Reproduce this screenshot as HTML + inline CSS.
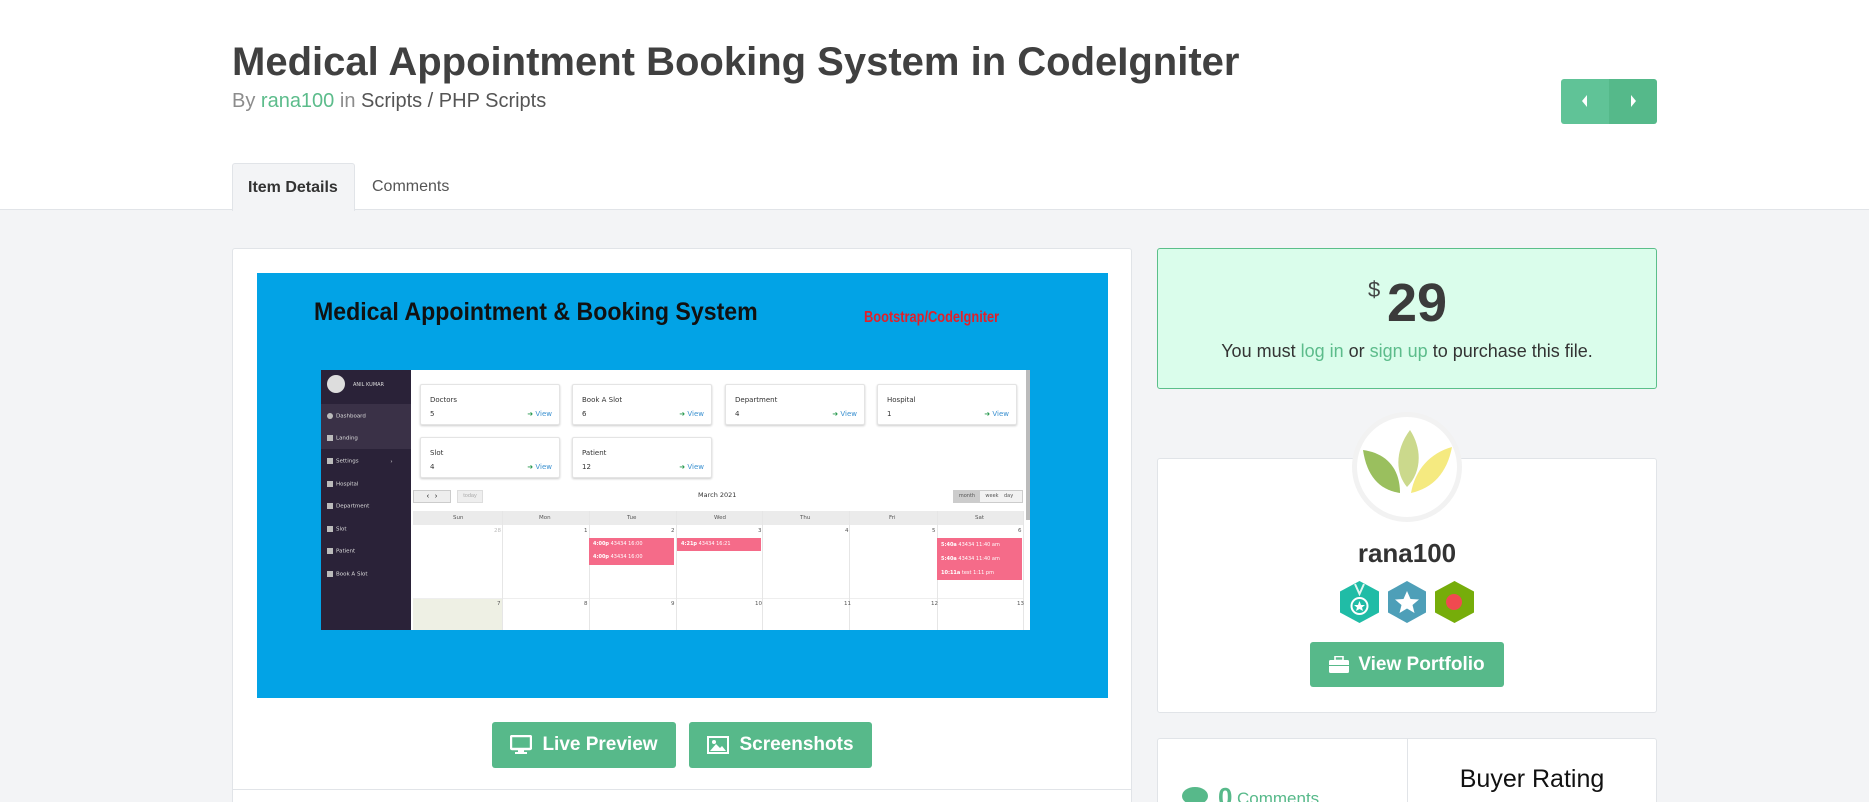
<!DOCTYPE html>
<html><head><meta charset="utf-8"><style>
*{margin:0;padding:0;box-sizing:border-box}
html,body{width:1869px;height:802px;overflow:hidden}
body{background:#f3f4f6;font-family:"Liberation Sans",Arial,sans-serif;position:relative}
.a{position:absolute}
.top{left:0;top:0;width:1869px;height:210px;background:#fff;border-bottom:1px solid #e1e4e8}
.btn{position:absolute;background:#57b98a;color:#fff;font-weight:bold;border-radius:3px;display:flex;align-items:center;justify-content:center;font-size:19px}
.card{position:absolute;background:#fff;border:1px solid #e1e4e8;border-radius:3px}
.sc{position:absolute;background:#fff;border:1px solid #e4e4e4;box-shadow:0 1px 2px rgba(0,0,0,.2);border-radius:2px;font-size:7px;color:#333;font-family:"DejaVu Sans",sans-serif}
.sc .t{position:absolute;left:9px;top:11px}
.sc .n{position:absolute;left:9px;top:25px}
.sc .v{position:absolute;right:7px;top:25px;color:#3a90d0}
.sc .v b{color:#2a9a50}
.si{position:absolute;left:327px;color:#ddd;font-size:5.5px;font-family:"DejaVu Sans",sans-serif;white-space:nowrap}
.si i{display:inline-block;width:6px;height:6px;background:#bbb;margin-right:3px;vertical-align:middle}
.col{position:absolute;top:511px;height:119px;border-left:1px solid #e6e6e6}
.dn{position:absolute;font-size:5.5px;color:#555;font-family:"DejaVu Sans",sans-serif}
.ev{position:absolute;background:#f56b89;color:#fff;font-size:5px;font-family:"DejaVu Sans",sans-serif;padding-left:4px}
</style></head><body>
<div class="a top"></div>
<div class="a" style="left:232px;top:40px;font-size:40px;font-weight:bold;color:#404040;white-space:nowrap">Medical Appointment Booking System in CodeIgniter</div>
<div class="a" style="left:232px;top:90px;font-size:20px;color:#8c8c8c;white-space:nowrap">By <span style="color:#5cbc8b">rana100</span> in <span style="color:#555">Scripts / PHP Scripts</span></div>
<div class="a" style="left:1561px;top:79px;width:48px;height:45px;background:#60c397;border-radius:3px 0 0 3px"></div>
<div class="a" style="left:1609px;top:79px;width:48px;height:45px;background:#55b98a;border-radius:0 3px 3px 0"></div>
<svg class="a" style="left:1579px;top:93px" width="12" height="16"><path d="M8 2 L3 8 L8 14Z" fill="#fff"/></svg>
<svg class="a" style="left:1627px;top:93px" width="12" height="16"><path d="M4 2 L9 8 L4 14Z" fill="#fff"/></svg>
<div class="a" style="left:232px;top:163px;width:123px;height:48px;background:#f3f4f6;border:1px solid #e1e4e8;border-bottom:none;border-radius:3px 3px 0 0"></div>
<div class="a" style="left:248px;top:179px;font-size:16px;font-weight:bold;color:#333">Item Details</div>
<div class="a" style="left:372px;top:178px;font-size:16px;color:#555">Comments</div>

<div class="card" style="left:232px;top:248px;width:900px;height:560px"></div>
<div class="a" style="left:232px;top:789px;width:900px;height:1px;background:#e1e4e8"></div>
<div class="a" style="left:257px;top:273px;width:851px;height:425px;background:#02a3e6"></div>
<div class="a" style="left:314px;top:298px;font-size:25px;font-weight:bold;color:#111;white-space:nowrap;transform:scaleX(.925);transform-origin:left">Medical Appointment &amp; Booking System</div>
<div class="a" style="left:864px;top:309px;font-size:16px;font-weight:bold;color:#e0202a;white-space:nowrap;transform:scaleX(.8);transform-origin:left">Bootstrap/CodeIgniter</div>

<div class="a" style="left:321px;top:370px;width:709px;height:260px;background:#fff"></div>
<div class="a" style="left:321px;top:370px;width:90px;height:260px;background:#2a2238"></div>
<div class="a" style="left:321px;top:404px;width:90px;height:45px;background:#3a3147"></div>
<div class="a" style="left:327px;top:375px;width:18px;height:18px;border-radius:50%;background:#ddd"></div>
<div class="a" style="left:353px;top:382px;font-size:5px;color:#ddd;font-family:'DejaVu Sans',sans-serif">ANIL KUMAR</div>
<div class="si" style="top:413px"><i style="border-radius:50%"></i>Dashboard</div>
<div class="si" style="top:435px"><i></i>Landing</div>
<div class="si" style="top:458px"><i></i>Settings <span style="margin-left:30px">›</span></div>
<div class="si" style="top:481px"><i></i>Hospital</div>
<div class="si" style="top:503px"><i></i>Department</div>
<div class="si" style="top:526px"><i></i>Slot</div>
<div class="si" style="top:548px"><i></i>Patient</div>
<div class="si" style="top:571px"><i></i>Book A Slot</div>

<div class="sc" style="left:420px;top:384px;width:140px;height:41px"><span class="t">Doctors</span><span class="n">5</span><span class="v"><b>➜</b> View</span></div>
<div class="sc" style="left:572px;top:384px;width:140px;height:41px"><span class="t">Book A Slot</span><span class="n">6</span><span class="v"><b>➜</b> View</span></div>
<div class="sc" style="left:725px;top:384px;width:140px;height:41px"><span class="t">Department</span><span class="n">4</span><span class="v"><b>➜</b> View</span></div>
<div class="sc" style="left:877px;top:384px;width:140px;height:41px"><span class="t">Hospital</span><span class="n">1</span><span class="v"><b>➜</b> View</span></div>
<div class="sc" style="left:420px;top:437px;width:140px;height:41px"><span class="t">Slot</span><span class="n">4</span><span class="v"><b>➜</b> View</span></div>
<div class="sc" style="left:572px;top:437px;width:140px;height:41px"><span class="t">Patient</span><span class="n">12</span><span class="v"><b>➜</b> View</span></div>

<div class="a" style="left:413px;top:490px;width:38px;height:13px;background:#eee;border:1px solid #ccc;font-size:7px;text-align:center;line-height:11px">‹ &nbsp; ›</div>
<div class="a" style="left:457px;top:490px;width:26px;height:13px;background:#eee;border:1px solid #ddd;font-size:5.5px;color:#aaa;text-align:center;line-height:11px">today</div>
<div class="a" style="left:698px;top:491px;font-size:6.5px;color:#333;font-family:'DejaVu Sans',sans-serif">March 2021</div>
<div class="a" style="left:953px;top:490px;width:70px;height:13px;background:#f2f2f2;border:1px solid #ccc;font-size:5px;color:#555;line-height:11px;font-family:'DejaVu Sans',sans-serif"><span style="background:#ccc;display:inline-block;width:26px;text-align:center">month</span><span style="display:inline-block;width:24px;text-align:center">week</span>day</div>
<div class="a" style="left:413px;top:511px;width:610px;height:14px;background:#ebebeb"></div>
<div class="a" style="left:413px;top:598px;width:89px;height:32px;background:#eef0e4"></div>
<div class="a" style="left:413px;top:598px;width:610px;height:1px;background:#eee"></div>
<div class="col" style="left:502px"></div><div class="col" style="left:589px"></div><div class="col" style="left:676px"></div><div class="col" style="left:762px"></div><div class="col" style="left:849px"></div><div class="col" style="left:937px"></div><div class="col" style="left:1023px"></div>
<div class="a" style="left:1026px;top:370px;width:4px;height:150px;background:#bbb"></div>
<div class="dn" style="left:453px;top:515px">Sun</div><div class="dn" style="left:539px;top:515px">Mon</div><div class="dn" style="left:627px;top:515px">Tue</div><div class="dn" style="left:714px;top:515px">Wed</div><div class="dn" style="left:800px;top:515px">Thu</div><div class="dn" style="left:889px;top:515px">Fri</div><div class="dn" style="left:975px;top:515px">Sat</div>
<div class="dn" style="left:494px;top:528px;color:#bbb">28</div><div class="dn" style="left:584px;top:528px">1</div><div class="dn" style="left:671px;top:528px">2</div><div class="dn" style="left:758px;top:528px">3</div><div class="dn" style="left:845px;top:528px">4</div><div class="dn" style="left:932px;top:528px">5</div><div class="dn" style="left:1018px;top:528px">6</div>
<div class="dn" style="left:497px;top:601px">7</div><div class="dn" style="left:584px;top:601px">8</div><div class="dn" style="left:671px;top:601px">9</div><div class="dn" style="left:755px;top:601px">10</div><div class="dn" style="left:844px;top:601px">11</div><div class="dn" style="left:931px;top:601px">12</div><div class="dn" style="left:1017px;top:601px">13</div>
<div class="ev" style="left:589px;top:538px;width:85px;height:27px;line-height:13px"><b>4:00p</b> 43434 16:00<br><b>4:00p</b> 43434 16:00</div>
<div class="ev" style="left:677px;top:538px;width:84px;height:13px;line-height:13px"><b>4:21p</b> 43434 16:21</div>
<div class="ev" style="left:937px;top:538px;width:85px;height:42px;line-height:14px"><b>5:40a</b> 43434 11:40 am<br><b>5:40a</b> 43434 11:40 am<br><b>10:11a</b> test 1:11 pm</div>

<div class="btn" style="left:492px;top:722px;width:184px;height:46px"><svg width="22" height="20" style="margin-right:10px"><rect x="1" y="1" width="20" height="13" rx="1" fill="none" stroke="#fff" stroke-width="2.4"/><rect x="8" y="14" width="6" height="3" fill="#fff"/><rect x="5" y="17" width="12" height="2" fill="#fff"/></svg>Live Preview</div>
<div class="btn" style="left:689px;top:722px;width:183px;height:46px"><svg width="22" height="18" style="margin-right:10px"><rect x="1" y="1" width="20" height="16" fill="none" stroke="#fff" stroke-width="2"/><path d="M3 15 L9 8 L13 12 L15 10 L19 15Z" fill="#fff"/><circle cx="7" cy="6" r="2" fill="#fff"/></svg>Screenshots</div>

<div class="a" style="left:1157px;top:248px;width:500px;height:141px;background:#dafdeb;border:1px solid #5bbf8a;border-radius:3px"></div>
<div class="a" style="left:1368px;top:277px;font-size:22px;color:#444">$</div>
<div class="a" style="left:1387px;top:272px;font-size:54px;font-weight:bold;color:#3b3b3b">29</div>
<div class="a" style="left:1157px;top:341px;width:500px;text-align:center;font-size:18px;color:#333">You must <span style="color:#5cbc8b">log in</span> or <span style="color:#5cbc8b">sign up</span> to purchase this file.</div>

<div class="card" style="left:1157px;top:458px;width:500px;height:255px"></div>
<div class="a" style="left:1352px;top:412px;width:110px;height:110px;border-radius:50%;background:#fff;border:5px solid #f2f2f2"></div>
<svg class="a" style="left:1355px;top:415px" width="104" height="104" viewBox="0 0 104 104">
<path d="M45 78 C25 75 12 62 8 35 C30 38 45 52 45 78Z" fill="#9abf5e"/>
<path d="M52 72 C40 58 40 35 55 15 C68 35 66 58 52 72Z" fill="#cbd98c"/>
<path d="M56 78 C60 55 75 38 97 32 C92 58 78 73 56 78Z" fill="#f5ea80"/>
</svg>
<div class="a" style="left:1157px;top:538px;width:500px;text-align:center;font-size:26px;font-weight:bold;color:#333">rana100</div>
<svg class="a" style="left:1340px;top:580px" width="140" height="44">
<path d="M19.5 1 L39 11.5 L39 32.5 L19.5 43 L0 32.5 L0 11.5Z" fill="#20bca6"/>
<circle cx="19.5" cy="26" r="8" fill="none" stroke="#fff" stroke-width="2"/><path d="M19.5 21 L21 25 L25 25 L22 27.5 L23 31 L19.5 29 L16 31 L17 27.5 L14 25 L18 25Z" fill="#fff"/><path d="M15 4 L19.5 14 L24 4" fill="none" stroke="#e0f5f0" stroke-width="2"/>
<path d="M67 1 L86 11.5 L86 32.5 L67 43 L48 32.5 L48 11.5Z" fill="#4e9fb8"/>
<path d="M67 11 L70.5 19 L79 19.5 L72.5 25 L74.5 33 L67 28.5 L59.5 33 L61.5 25 L55 19.5 L63.5 19Z" fill="#fff"/>
<path d="M114.5 1 L134 11.5 L134 32.5 L114.5 43 L95 32.5 L95 11.5Z" fill="#76ad0a"/>
<circle cx="114" cy="22" r="8" fill="#f04a50"/>
</svg>
<div class="btn" style="left:1310px;top:642px;width:194px;height:45px;font-size:19px"><svg width="20" height="17" style="margin-right:9px"><rect x="0" y="4" width="20" height="13" rx="1.5" fill="#fff"/><rect x="6" y="0.5" width="8" height="4" fill="none" stroke="#fff" stroke-width="1.6"/><rect x="0" y="9" width="20" height="1" fill="#57b98a"/></svg>View Portfolio</div>

<div class="card" style="left:1157px;top:738px;width:500px;height:70px"></div>
<div class="a" style="left:1407px;top:739px;width:1px;height:63px;background:#e1e4e8"></div>
<div class="a" style="left:1182px;top:787px;width:26px;height:18px;border-radius:50%;background:#57b98a"></div>
<div class="a" style="left:1218px;top:782px;font-size:26px;font-weight:bold;color:#57b98a">0</div>
<div class="a" style="left:1237px;top:789px;font-size:17px;color:#57b98a">Comments</div>
<div class="a" style="left:1407px;top:765px;width:250px;text-align:center;font-size:25px;color:#111">Buyer Rating</div>
</body></html>
